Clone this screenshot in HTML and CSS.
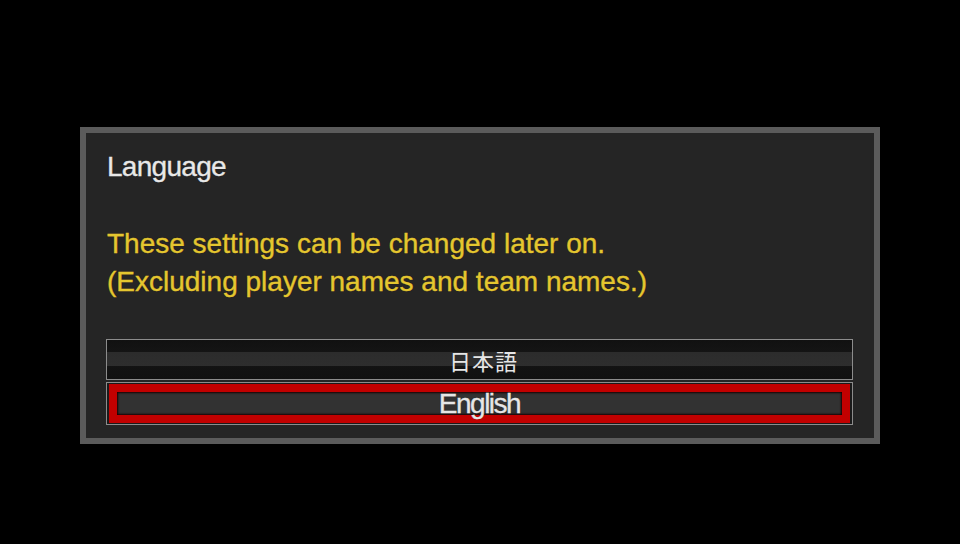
FILE: index.html
```html
<!DOCTYPE html>
<html lang="en">
<head>
<meta charset="utf-8">
<title>Language</title>
<link rel="stylesheet" href="styles.css">
</head>
<body>
  <section class="dialog">
    <h1 class="title">Language</h1>
    <p class="note">These settings can be changed later on.<br>(Excluding player names and team names.)</p>
    <div class="options">
      <div class="option option-ja"><span class="label-ja">日本語</span></div>
      <div class="option option-selected"><div class="sel-frame"><span class="label-en">English</span></div></div>
    </div>
  </section>
</body>
</html>
```
FILE: styles.css
```css
html, body {
  margin: 0;
  padding: 0;
  background: #000;
  width: 960px;
  height: 544px;
  overflow: hidden;
}

body {
  font-family: "Liberation Sans", Arial, "Noto Sans CJK JP", sans-serif;
  padding-top: 127px;
  box-sizing: border-box;
}

.dialog {
  box-sizing: border-box;
  width: 800px;
  height: 317px;
  margin-left: 80px;
  background: #252525;
  border: 6px solid #5b5b5b;
  padding: 18px 21px 0 20px;
  display: flex;
  flex-direction: column;
}

.title {
  margin: 0 0 0 1px;
  font-weight: normal;
  font-size: 28px;
  line-height: 32px;
  letter-spacing: -0.7px;
  color: #e8e8e8;
  -webkit-text-stroke: 0.35px #e8e8e8;
  text-shadow: 0 0 1px rgba(0,0,0,0.6);
}

.note {
  margin: 42px 0 0 1px;
  font-size: 28px;
  line-height: 38px;
  color: #e4c630;
  -webkit-text-stroke: 0.35px #e4c630;
  text-shadow: 0 0 1px rgba(60,40,0,0.7);
}

.options {
  margin-top: 38px;
  display: flex;
  flex-direction: column;
  gap: 2px;
}

.option {
  box-sizing: border-box;
  border: 1px solid #8c8c8c;
  display: flex;
  align-items: center;
  justify-content: center;
}

.option-ja {
  height: 41px;
  background: linear-gradient(#111 0, #141414 30%, #2c2c2c 32%, #2e2e2e 66%, #131313 68%, #111 100%);
  padding-left: 8px;
}

.label-ja {
  font-family: "Noto Sans CJK JP", sans-serif;
  font-size: 22px;
  line-height: 24px;
  color: #e6e6e6;
  letter-spacing: 1px;
}

.option-selected {
  height: 43px;
  background: #1a1a1a;
  padding: 1px 2px;
  align-items: stretch;
}

.sel-frame {
  flex: 1;
  box-sizing: border-box;
  border: 8px solid #c20000;
  background: #323232;
  box-shadow: inset 0 0 2px 1px #1a0000;
  display: flex;
  align-items: center;
  justify-content: center;
}

.label-en {
  font-size: 28px;
  line-height: 24px;
  letter-spacing: -1.5px;
  color: #e6e6e6;
  -webkit-text-stroke: 0.35px #e6e6e6;
  text-shadow: 0 0 1px rgba(0,0,0,0.6);
}
```
